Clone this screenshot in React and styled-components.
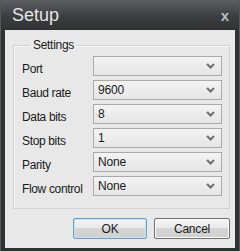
import React from "react";
import styled, { createGlobalStyle } from "styled-components";

const GlobalStyle = createGlobalStyle`
  body {
    margin: 0;
    font-family: "Liberation Sans", Arial, sans-serif;
  }
`;

const Window = styled.div`
  width: 240px;
  height: 251px;
  box-sizing: border-box;
  display: flex;
  flex-direction: column;
  background: #2f3133;
  border-left: 1px solid #55585b;
  border-right: 1px solid #55585b;
`;

const TitleBar = styled.div`
  height: 30px;
  flex: none;
  display: flex;
  align-items: center;
  justify-content: space-between;
  padding: 0 10px 0 11px;
  background: linear-gradient(#5c5e61, #3b3d40 55%, #303234);
  color: #e6e6e6;
`;

const Title = styled.span`
  font-size: 18px;
  margin-top: 1px;
`;

const CloseX = styled.span`
  font-size: 15px;
  font-weight: bold;
  color: #b9bcbf;
`;

const Client = styled.div`
  flex: 1;
  margin: 0 4px 3px 4px;
  background: #e8e8e8;
  display: flex;
  flex-direction: column;
  padding: 8px 5px 0 8px;
`;

const GroupBox = styled.fieldset`
  margin: 0;
  padding: 4px 7px 12px 8px;
  border: 1px solid #d3d3d3;
  box-shadow: inset 1px 1px 0 #f6f6f6;
  display: grid;
  grid-template-columns: 71px 129px;
  row-gap: 4px;
  align-items: center;
`;

const Legend = styled.legend`
  font-size: 12px;
  letter-spacing: -0.3px;
  color: #1a1a1a;
  padding: 0 3px;
  margin-left: 8px;
`;

const Label = styled.span`
  font-size: 12px;
  letter-spacing: -0.35px;
  color: #1a1a1a;
  padding-top: 5px;
`;

const Combo = styled.div`
  height: 20px;
  box-sizing: border-box;
  border: 1px solid #a9a9a9;
  background: linear-gradient(#f3f3f3, #e6e6e6);
  display: flex;
  align-items: center;
  justify-content: space-between;
  padding: 0 6px 1px 4px;
  font-size: 12px;
  letter-spacing: -0.2px;
  color: #1a1a1a;
`;

const Chevron = () => (
  <svg width="9" height="6" viewBox="0 0 9 6">
    <path d="M1 1 L4.5 4.5 L8 1" fill="none" stroke="#6e6e6e" strokeWidth="2" />
  </svg>
);

const ButtonRow = styled.div`
  display: flex;
  justify-content: flex-end;
  gap: 7px;
  margin-top: 9px;
`;

const Button = styled.div`
  width: ${(p) => p.w}px;
  height: 21px;
  box-sizing: border-box;
  border: 1px solid ${(p) => (p.focused ? "#6d9ec4" : "#6f6f6f")};
  border-radius: 2px;
  background: linear-gradient(#f6f6f6, #e9e9e9 45%, #d6d6d6 50%, #cfcfcf);
  box-shadow: inset 0 0 0 1px ${(p) => (p.focused ? "#bfe3f6" : "#fbfbfb")};
  display: flex;
  align-items: center;
  justify-content: center;
  font-size: 12px;
  letter-spacing: -0.2px;
  color: #1a1a1a;
`;

const rows = [
  ["Port", ""],
  ["Baud rate", "9600"],
  ["Data bits", "8"],
  ["Stop bits", "1"],
  ["Parity", "None"],
  ["Flow control", "None"],
];

export default function App() {
  return (
    <>
      <GlobalStyle />
      <Window>
        <TitleBar>
          <Title>Setup</Title>
          <CloseX>x</CloseX>
        </TitleBar>
        <Client>
          <GroupBox>
            <Legend>Settings</Legend>
            {rows.map(([label, value]) => (
              <React.Fragment key={label}>
                <Label>{label}</Label>
                <Combo>
                  <span>{value}</span>
                  <Chevron />
                </Combo>
              </React.Fragment>
            ))}
          </GroupBox>
          <ButtonRow>
            <Button w={74} focused>OK</Button>
            <Button w={76}>Cancel</Button>
          </ButtonRow>
        </Client>
      </Window>
    </>
  );
}
